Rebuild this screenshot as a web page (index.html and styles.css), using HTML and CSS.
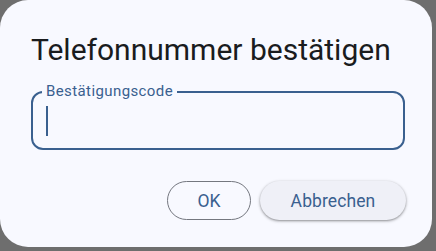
FILE: index.html
```html
<!DOCTYPE html>
<html lang="de">
<head>
<meta charset="utf-8">
<link rel="stylesheet" href="styles.css">
</head>
<body>
<div class="dialog">
  <h1 class="title">Telefonnummer bestätigen</h1>
  <div class="field">
    <span class="label">Bestätigungscode</span>
    <span class="cursor"></span>
  </div>
  <div class="actions">
    <button class="btn outlined">OK</button>
    <button class="btn tonal">Abbrechen</button>
  </div>
</div>
</body>
</html>
```
FILE: styles.css
```css
html, body {
  margin: 0;
  padding: 0;
}
body {
  width: 436px;
  height: 251px;
  background: #6e6e6e;
  font-family: Roboto, "Noto Sans", sans-serif;
  overflow: hidden;
}
.dialog {
  box-sizing: border-box;
  width: 432px;
  height: 247px;
  background: #f8f9ff;
  border-radius: 28px;
  padding: 32px 26px 0 31px;
  display: flex;
  flex-direction: column;
}
.title {
  margin: 0;
  font-weight: 400;
  font-size: 30px;
  line-height: 36px;
  color: #1a1c1e;
  padding-left: 0;
}
.field {
  position: relative;
  margin: 23px 1px 0 0;
  height: 59px;
  box-sizing: border-box;
  border: 2px solid #3a608f;
  border-radius: 12px;
  display: flex;
  align-items: center;
  padding-left: 13px;
}
.label {
  position: absolute;
  left: 9px;
  top: -11px;
  padding: 0 4px;
  background: #f8f9ff;
  font-size: 15px;
  line-height: 18px;
  color: #3a608f;
  letter-spacing: 0.4px;
}
.cursor {
  width: 2px;
  height: 30px;
  background: #3a608f;
}
.actions {
  margin-top: 31px;
  display: flex;
  justify-content: flex-end;
  gap: 9px;
}
.btn {
  font-family: Roboto, "Noto Sans", sans-serif;
  font-size: 17.5px;
  color: #3a608f;
  height: 39px;
  border-radius: 20px;
  padding: 0;
  letter-spacing: 0.1px;
}
.outlined {
  width: 84px;
  background: transparent;
  border: 1px solid #74777f;
}
.tonal {
  width: 146px;
  border: none;
  background: #eff0f7;
  box-shadow: 0 1px 2px rgba(0,0,0,0.3), 0 1px 3px 1px rgba(0,0,0,0.12);
}
```
